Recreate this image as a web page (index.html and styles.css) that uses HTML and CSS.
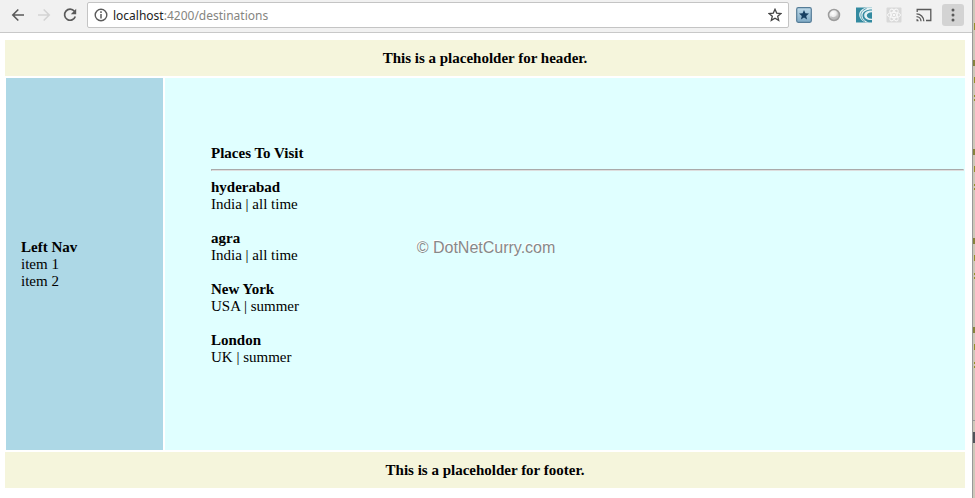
FILE: index.html
```html
<!DOCTYPE html>
<html lang="en">

<head>
	<meta charset="utf-8">
	<title>Destinations</title>
	<link rel="stylesheet" href="styles.css">
</head>

<body>
	<div class="browser">
		<div class="toolbar">
			<button class="tool-btn" aria-label="Back">
				<svg width="14" height="14" viewBox="0 0 14 14" fill="none" stroke="#5a5a5a" stroke-width="1.6"><path d="M13 7H2M7.300 1.500L1.800 7L7.300 12.500" /></svg>
			</button>
			<button class="tool-btn" aria-label="Forward" disabled>
				<svg width="14" height="14" viewBox="0 0 14 14" fill="none" stroke="#d3d3d3" stroke-width="1.6"><path d="M1 7H12M6.700 1.500L12.200 7L6.700 12.500" /></svg>
			</button>
			<button class="tool-btn" aria-label="Reload">
				<svg width="14" height="14" viewBox="0 0 14 14"><path d="M11.400 3.300A5.500 5.500 0 1 0 12.300 8.500" fill="none" stroke="#5a5a5a" stroke-width="1.700" /><path d="M13.200 .8V6.200H7.800Z" fill="#5a5a5a" /></svg>
			</button>

			<div class="address-bar">
				<svg width="14" height="14" viewBox="0 0 14 14"><circle cx="7" cy="7" r="5.800" fill="none" stroke="#5a5a5a" stroke-width="1.400" /><path d="M7 3.300V4.900M7 6V10.600" stroke="#5a5a5a" stroke-width="1.500" /></svg>
				<a class="url" href="#"><span class="host">localhost</span>:4200/destinations</a>
				<button class="star-btn" aria-label="Bookmark this page">
					<svg width="14" height="14" viewBox="0 0 14 14"><path d="M7 1.300L8.700 5.100L12.900 5.500L9.700 8.300L10.700 12.400L7 10.200L3.300 12.400L4.300 8.300L1.100 5.500L5.300 5.100Z" fill="none" stroke="#444" stroke-width="1.300" /></svg>
				</button>
			</div>

			<div class="extensions">
				<button class="ext-btn" aria-label="Bookmarks extension">
					<svg width="16" height="16" viewBox="0 0 16 16">
						<defs><linearGradient id="tile" x2="0" y2="1"><stop stop-color="#bfdae9" /><stop offset="1" stop-color="#7faac5" /></linearGradient></defs>
						<rect x=".7" y=".7" width="14.600" height="14.600" rx="1.500" fill="url(#tile)" stroke="#557c97" stroke-width="1.200" />
						<path d="M8 3L9.400 6.300L13 6.600L10.200 8.900L11.100 12.400L8 10.500L4.900 12.400L5.800 8.900L3 6.600L6.600 6.300Z" fill="#173f61" />
					</svg>
				</button>
				<button class="ext-btn" aria-label="Sphere extension">
					<svg width="16" height="16" viewBox="0 0 16 16">
						<defs><radialGradient id="ball" cx=".4" cy=".35"><stop stop-color="#fff" /><stop offset=".6" stop-color="#ececec" /><stop offset="1" stop-color="#bbb" /></radialGradient></defs>
						<circle cx="8" cy="8" r="5.500" fill="url(#ball)" stroke="#9c9c9c" stroke-width="1.500" />
						<path d="M4.500 9Q8 12 11.500 8Q10.500 12 7.500 12Q5 11.500 4.500 9Z" fill="#bdbdbd" />
					</svg>
				</button>
				<button class="ext-btn" aria-label="Swirl extension">
					<svg width="16" height="16" viewBox="0 0 16 16">
						<path d="M0 .5H16V15.500H0Z" fill="#338aa0" />
						<path d="M16 .5H11C6 1 3 4.500 3.200 8C3.500 12 7 15 11 15.500H13C9 14 6.500 11.500 6.500 8.500C6.500 5 10 2.500 16 2.500Z" fill="#e4f1f4" />
						<path d="M16 3.500C11 3.500 8.200 5.500 8.200 8.200C8.200 11.200 11.500 13.500 16 13V11.800C13 12 10.800 10.500 10.800 8.500C10.800 6.500 13 5.200 16 5.200Z" fill="#e4f1f4" />
						<path d="M10.500 1.500C6.500 3 4.800 5.500 4.900 8.300C5 11 6.500 13 9 14.500" fill="none" stroke="#338aa0" stroke-width=".8" />
					</svg>
				</button>
				<button class="ext-btn" aria-label="Atom extension">
					<svg width="16" height="16" viewBox="0 0 16 16">
						<rect x=".5" y=".5" width="15" height="15" rx="1" fill="#d9d9d9" />
						<g fill="none" stroke="#f8f8f8"><ellipse cx="8" cy="8" rx="6.500" ry="2.600" /><ellipse cx="8" cy="8" rx="6.500" ry="2.600" transform="rotate(60 8 8)" /><ellipse cx="8" cy="8" rx="6.500" ry="2.600" transform="rotate(120 8 8)" /></g>
						<circle cx="8" cy="8" r="1.300" fill="#f8f8f8" />
					</svg>
				</button>
				<button class="ext-btn" aria-label="Cast">
					<svg width="16" height="16" viewBox="0 0 16 16" fill="none" stroke="#5a5a5a" stroke-width="1.300">
						<path d="M1.200 5V2.500H14.800V13.500H10" />
						<path d="M.5 9.700A4.500 4.500 0 0 1 5 14.200M.5 6.900A7.300 7.300 0 0 1 7.800 14.200" />
						<path d="M.5 12V14.200H2.700A2.200 2.200 0 0 0 .5 12Z" fill="#5a5a5a" stroke="none" />
					</svg>
				</button>
			</div>
			<button class="menu-btn" aria-label="Menu">
				<svg width="4" height="14" viewBox="0 0 4 14" fill="#5a5a5a"><circle cx="2" cy="2" r="1.500" /><circle cx="2" cy="7" r="1.500" /><circle cx="2" cy="12" r="1.500" /></svg>
			</button>
		</div>

		<div class="page">
			<header class="banner">This is a placeholder for header.</header>
			<div class="columns">
				<nav class="left-nav">
					<h2>Left Nav</h2>
					<ul>
						<li>item 1</li>
						<li>item 2</li>
					</ul>
				</nav>
				<main class="content">
					<h2>Places To Visit</h2>
					<hr>
					<div class="place">
						<h3>hyderabad</h3>
						<p>India | all time</p>
					</div>
					<div class="place">
						<h3>agra</h3>
						<p>India | all time</p>
					</div>
					<div class="place">
						<h3>New York</h3>
						<p>USA | summer</p>
					</div>
					<div class="place">
						<h3>London</h3>
						<p>UK | summer</p>
					</div>
				</main>
			</div>
			<footer class="banner">This is a placeholder for footer.</footer>
			<div class="watermark">© DotNetCurry.com</div>
		</div>
	</div>

	<!-- Edge of the window behind the browser -->
	<svg class="behind" aria-hidden="true">
		<defs>
			<pattern id="marks" y="60" width="2" height="89" patternUnits="userSpaceOnUse">
				<rect width="2" height="6" fill="#85833d" />
				<rect x="1" y="17" width="1" height="6" fill="#94902b" />
				<rect x="1" y="35" width="1" height="2" fill="#94902b" />
				<rect x="1" y="39" width="1" height="2" fill="#94902b" />
			</pattern>
		</defs>
		<rect x="1" y="23" width="1" height="7" fill="#94902b" />
		<rect y="60" width="2" height="312" fill="url(#marks)" />
		<rect y="420" width="2" height="1" fill="#999" />
		<rect y="432" width="2" height="11" fill="#50545a" />
	</svg>
</body>

</html>
```

FILE: styles.css
```css
* {
	box-sizing: border-box;
	margin: 0;
	padding: 0;
}

body {
	display: flex;
	min-height: 100vh;
	background: white;
	color: black;
	font-family: "Liberation Serif", "Times New Roman", serif;
	font-size: 15px;
	line-height: 17px;
}

button {
	display: flex;
	align-items: center;
	justify-content: center;
	background: none;
	border: none;
	cursor: pointer;
}

.browser {
	flex: 1;
	display: flex;
	flex-direction: column;
	border-right: 1px solid #999;
}

.behind {
	width: 2px;
	height: auto;
	background: #cdc8b9;
}

/* Browser toolbar */
.toolbar {
	display: flex;
	align-items: center;
	height: 33px;
	padding: 0 8px 2px 5px;
	background: #f1f1f1;
	border-bottom: 1px solid #c8c8c8;
}

.tool-btn {
	width: 26px;
	height: 26px;
}

.address-bar {
	flex: 1;
	display: flex;
	align-items: center;
	gap: 5px;
	height: 26px;
	margin-left: 4px;
	padding: 0 6px;
	background: white;
	border: 1px solid #c4c4c4;
	border-radius: 2px;
}

.url {
	flex: 1;
	color: #85857f;
	font-family: "Noto Sans", "Segoe UI", sans-serif;
	font-size: 12px;
	text-decoration: none;
}

.host {
	color: #222;
}

.extensions {
	display: flex;
	gap: 14px;
	margin: 0 10px 0 7px;
}

.ext-btn {
	width: 16px;
	height: 16px;
}

.menu-btn {
	width: 22px;
	height: 22px;
	background: #d3d3d3;
	border-radius: 3px;
}

/* Page layout */
.page {
	position: relative;
	flex: 1;
	display: flex;
	flex-direction: column;
	gap: 2px;
	padding: 7px 7px 10px 5px;
}

.banner {
	padding: 10px 0 9px;
	background: beige;
	font-weight: bold;
	text-align: center;
}

.columns {
	flex: 1;
	display: flex;
	gap: 2px;
	padding-left: 1px;
}

.left-nav,
.content {
	display: flex;
	flex-direction: column;
	justify-content: center;
}

.left-nav {
	width: 157px;
	padding-left: 15px;
	background: lightblue;
}

.left-nav ul {
	list-style: none;
}

.content {
	flex: 1;
	padding: 0 1px 0 46px;
	background: lightcyan;
}

h2,
h3 {
	font-size: 15px;
}

hr {
	margin: 7px 0 8px;
	border: 1px solid;
	border-color: #aaa #ddd #ddd #aaa;
}

.place {
	padding-bottom: 17px;
}

.watermark {
	position: absolute;
	top: 205px;
	left: 0;
	width: 100%;
	color: #888;
	font-family: "Liberation Sans", Arial, sans-serif;
	font-size: 16px;
	line-height: 20px;
	text-align: center;
	text-shadow: -1px -1px white;
}
```
